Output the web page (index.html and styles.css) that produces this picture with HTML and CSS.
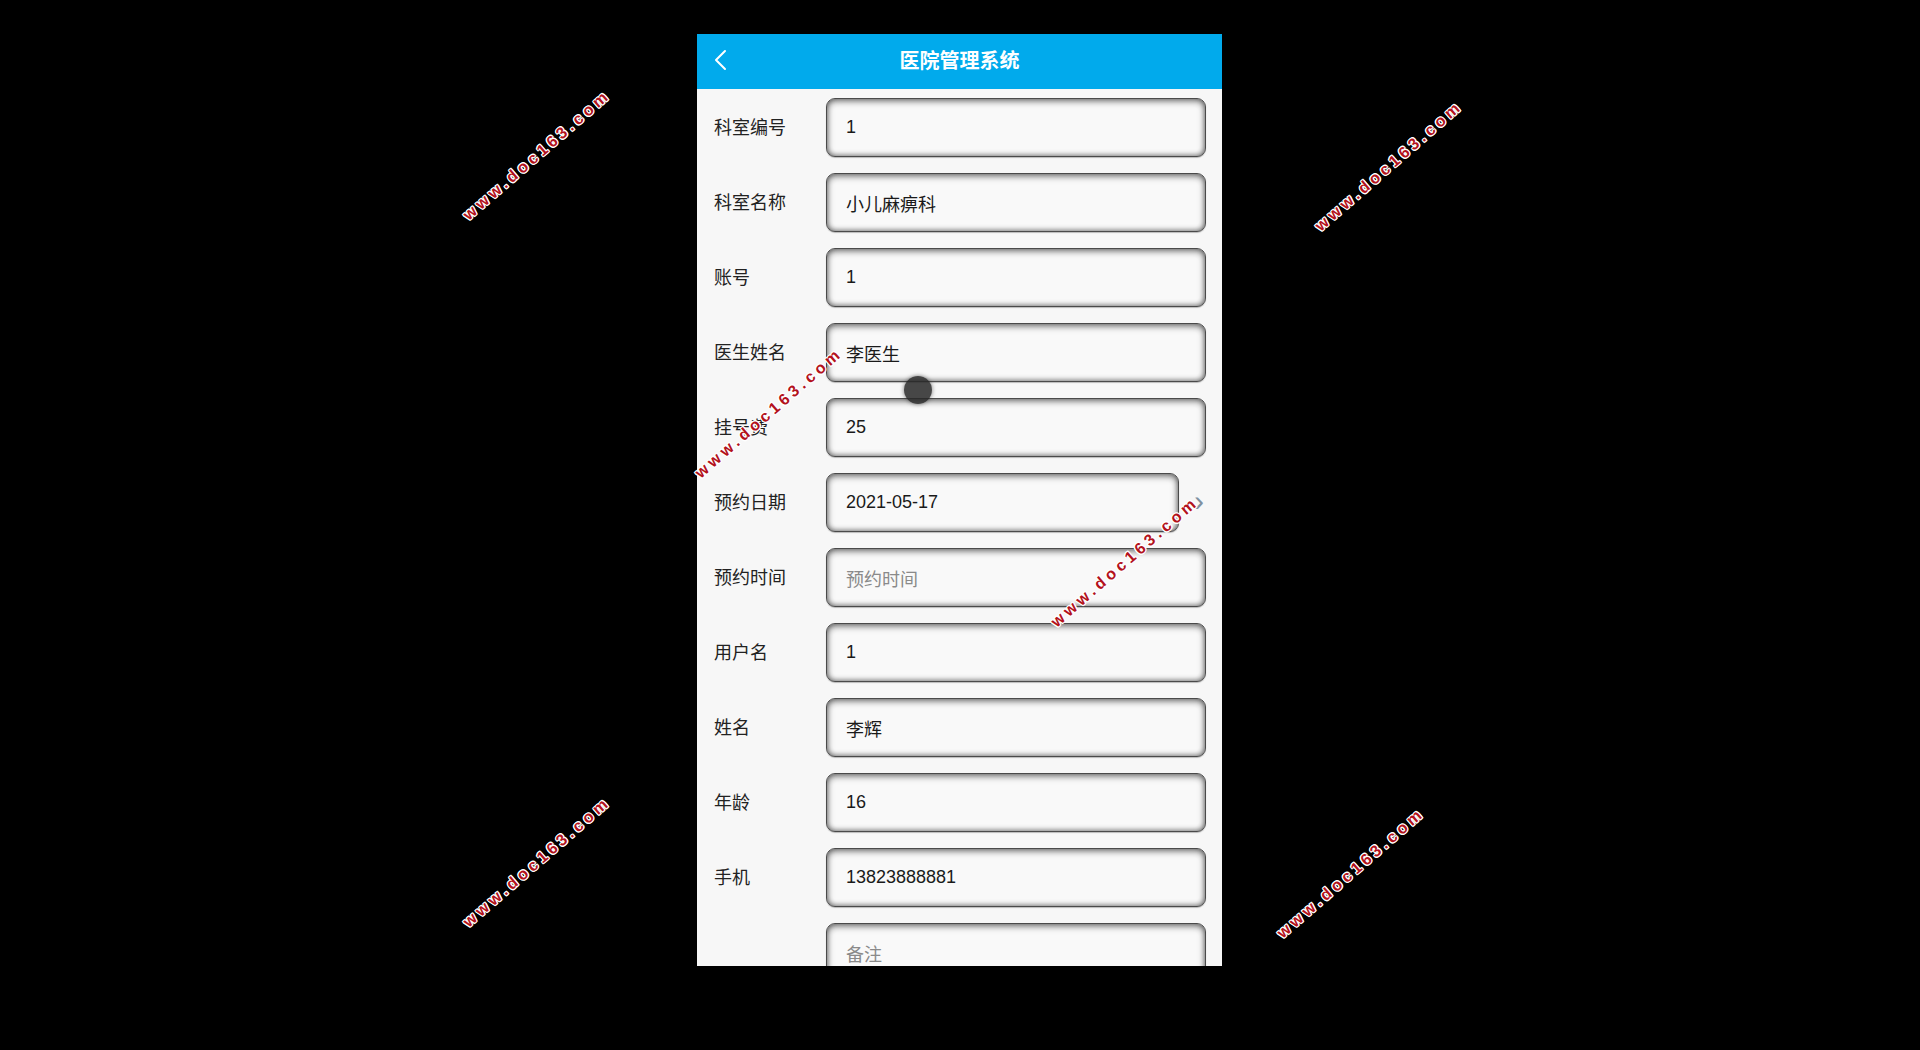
FILE: index.html
```html
<!DOCTYPE html>
<html lang="zh-CN">
<head>
<meta charset="utf-8">
<title>医院管理系统</title>
<link rel="stylesheet" href="styles.css">
</head>
<body>
<div class="stage">
  <div class="phone">
    <header class="bar">
      <svg class="back" viewBox="0 0 14 22" width="14" height="22"><path d="M12 2 L3 11 L12 20" fill="none" stroke="#fff" stroke-width="2" stroke-linecap="round" stroke-linejoin="round"/></svg>
      <h1 class="title">医院管理系统</h1>
    </header>
    <form class="form">
      <div class="row"><label class="lbl">科室编号</label><div class="field">1</div></div>
      <div class="row"><label class="lbl">科室名称</label><div class="field">小儿麻痹科</div></div>
      <div class="row"><label class="lbl">账号</label><div class="field">1</div></div>
      <div class="row"><label class="lbl">医生姓名</label><div class="field">李医生</div></div>
      <div class="row"><label class="lbl">挂号费</label><div class="field">25</div></div>
      <div class="row"><label class="lbl">预约日期</label><div class="field short">2021-05-17</div><span class="chev">›</span></div>
      <div class="row"><label class="lbl">预约时间</label><div class="field ph">预约时间</div></div>
      <div class="row"><label class="lbl">用户名</label><div class="field">1</div></div>
      <div class="row"><label class="lbl">姓名</label><div class="field">李辉</div></div>
      <div class="row"><label class="lbl">年龄</label><div class="field">16</div></div>
      <div class="row"><label class="lbl">手机</label><div class="field">13823888881</div></div>
      <div class="row"><label class="lbl"></label><div class="field ph">备注</div></div>
    </form>
  </div>
  <div class="touch"></div>
  <div class="wm wm1">www.doc163.com</div>
  <div class="wm wm2">www.doc163.com</div>
  <div class="wm wm3">www.doc163.com</div>
  <div class="wm wm4">www.doc163.com</div>
  <div class="wm wm5">www.doc163.com</div>
  <div class="wm wm6">www.doc163.com</div>
</div>
</body>
</html>
```
FILE: styles.css
```css
html, body {
  margin: 0;
  padding: 0;
  background: #000;
  height: 100%;
  overflow: hidden;
}
.stage {
  position: relative;
  box-sizing: border-box;
  width: 1920px;
  height: 1050px;
  padding: 34px 0 0 697px;
  font-family: "Liberation Sans", "Noto Sans CJK SC", sans-serif;
}
.phone {
  position: relative;
  width: 525px;
  height: 932px;
  background: #f7f7f7;
  overflow: hidden;
}
.bar {
  height: 55px;
  background: #01aaec;
  display: flex;
  align-items: center;
  justify-content: center;
  position: relative;
}
.back {
  position: absolute;
  left: 16px;
  top: 15px;
}
.title {
  margin: 0 0 4px;
  color: #fff;
  font-size: 20px;
  font-weight: bold;
}
.form {
  display: flex;
  flex-direction: column;
  gap: 16px;
  padding: 9px 16px 0 17px;
}
.row {
  display: flex;
  align-items: center;
  height: 59px;
}
.lbl {
  width: 112px;
  flex: none;
  font-size: 18px;
  color: #222;
  padding-bottom: 4px;
}
.field {
  flex: 1;
  box-sizing: border-box;
  height: 59px;
  border: 1.5px solid #4a4a4a;
  border-radius: 9px;
  background: #f9f9f9;
  box-shadow: inset 0 2px 7px rgba(0,0,0,0.55), inset 0 -1px 5px rgba(0,0,0,0.35), 0 1px 1px rgba(0,0,0,0.25);
  display: flex;
  align-items: center;
  padding-left: 19px;
  font-size: 18px;
  color: #1a1a1a;
}
.field.short {
  flex: none;
  width: 353px;
}
.field.ph {
  color: #8a8a8a;
}
.chev {
  margin-left: 15px;
  color: #7f90a0;
  font-size: 30px;
  line-height: 1;
  margin-top: -4px;
}
.touch {
  position: absolute;
  left: 904px;
  top: 376px;
  width: 28px;
  height: 28px;
  border-radius: 50%;
  background: rgba(40,40,40,0.85);
  box-shadow: 0 0 4px rgba(40,40,40,0.6);
}
.wm {
  position: absolute;
  transform: translate(-50%, -50%) rotate(-41deg);
  color: #b3121c;
  font-family: "Liberation Sans", sans-serif;
  font-weight: bold;
  font-size: 16px;
  letter-spacing: 4px;
  white-space: nowrap;
  text-shadow: 1px 0 0 #fff, -1px 0 0 #fff, 0 1px 0 #fff, 0 -1px 0 #fff, 1px 1px 0 #fff, -1px -1px 0 #fff, 1px -1px 0 #fff, -1px 1px 0 #fff;
}
.wm1 { left: 537px; top: 155px; }
.wm2 { left: 1389px; top: 166px; }
.wm3 { left: 537px; top: 862px; }
.wm4 { left: 1351px; top: 873px; }
.wm5 { left: 769px; top: 413px; }
.wm6 { left: 1125px; top: 562px; }
```
